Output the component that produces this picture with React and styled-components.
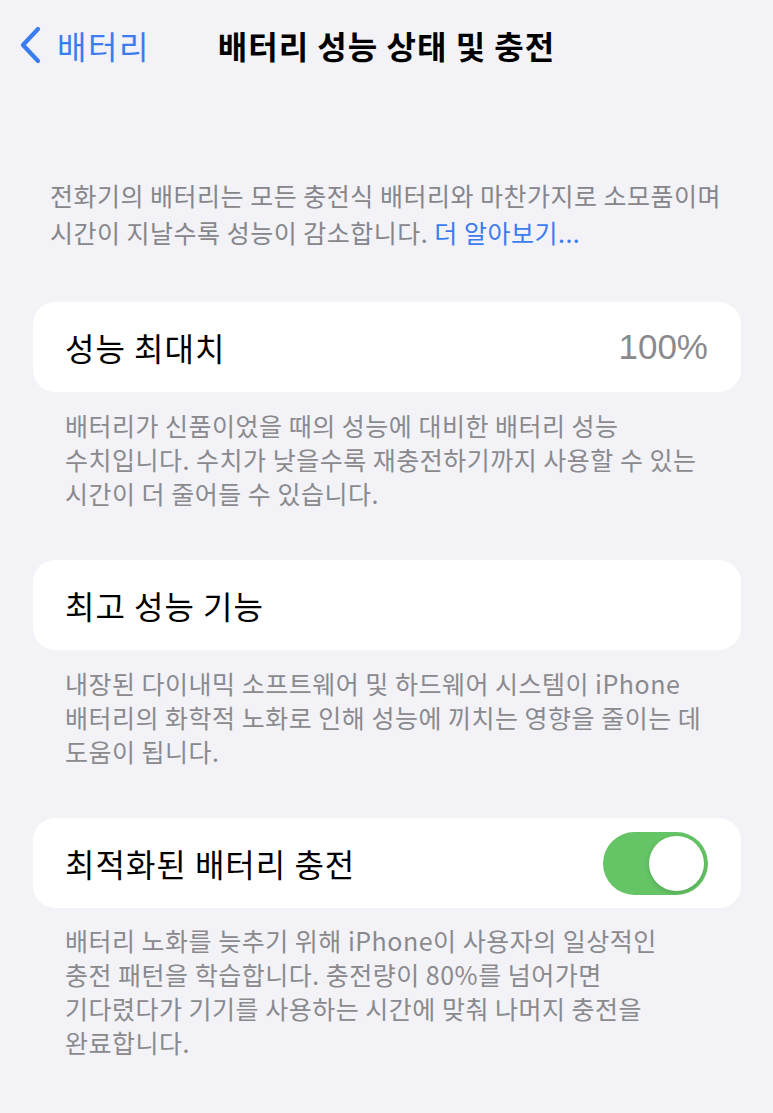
import styled, { createGlobalStyle } from "styled-components";

const GlobalStyle = createGlobalStyle`
  body {
    margin: 0;
    background: #f2f2f7;
    font-family: "Noto Sans CJK KR", "Noto Sans", sans-serif;
  }
`;

const Page = styled.div`
  width: 773px;
  min-height: 1113px;
  background: #f2f2f7;
`;

const NavBar = styled.div`
  height: 90px;
  display: grid;
  grid-template-columns: 1fr auto 1fr;
  align-items: center;
`;

const BackButton = styled.div`
  display: flex;
  align-items: center;
  gap: 16px;
  padding-left: 19px;
  color: #3b7cf0;
  font-size: 32px;
  letter-spacing: 1.5px;
`;

const Title = styled.h1`
  margin: 0;
  font-size: 32px;
  font-weight: 700;
  letter-spacing: 1px;
  color: #000;
`;

const Intro = styled.p`
  margin: 87px 0 0;
  padding: 0 20px 0 50px;
  font-size: 25px;
  line-height: 37px;
  letter-spacing: 0.5px;
  color: #86868b;
`;

const Link = styled.span`
  color: #3b7cf0;
`;

const Card = styled.div`
  margin: ${(p) => p.$top}px 32px 0 33px;
  height: 90px;
  background: #fff;
  border-radius: 22px;
  padding: 0 33px 0 32px;
  display: flex;
  align-items: center;
  justify-content: space-between;
`;

const Label = styled.span`
  font-size: 32px;
  color: #000;
  letter-spacing: 1px;
`;

const Value = styled.span`
  font-size: 35px;
  color: #8a8a8e;
  font-family: "Liberation Sans", "Noto Sans CJK KR", sans-serif;
`;

const Footnote = styled.p`
  margin: ${(p) => p.$top ?? 16}px 0 0;
  padding: 0 20px 0 65px;
  font-size: 25px;
  line-height: 34px;
  letter-spacing: 0.5px;
  color: #8a8a8e;
`;

const Line = styled.span`
  display: block;
  white-space: nowrap;
`;

const Toggle = styled.div`
  width: 105px;
  height: 63px;
  border-radius: 32px;
  background: #65c466;
  display: flex;
  align-items: center;
  justify-content: flex-end;
  padding: 0 4px;
  box-sizing: border-box;
`;

const Thumb = styled.div`
  width: 55px;
  height: 55px;
  border-radius: 50%;
  background: #fff;
  box-shadow: 0 2px 5px rgba(0, 0, 0, 0.15);
`;

const Lines = ({ lines }) => lines.map((l, i) => <Line key={i}>{l}</Line>);

export default function App() {
  return (
    <Page>
      <GlobalStyle />
      <NavBar>
        <BackButton>
          <svg width="22" height="38" viewBox="0 0 22 38">
            <path
              d="M19 3 L4 19 L19 35"
              fill="none"
              stroke="#3b7cf0"
              strokeWidth="4.2"
              strokeLinecap="round"
              strokeLinejoin="round"
            />
          </svg>
          배터리
        </BackButton>
        <Title>배터리 성능 상태 및 충전</Title>
        <div />
      </NavBar>

      <Intro>
        <Line>전화기의 배터리는 모든 충전식 배터리와 마찬가지로 소모품이며</Line>
        <Line>
          시간이 지날수록 성능이 감소합니다. <Link>더 알아보기...</Link>
        </Line>
      </Intro>

      <Card $top={51}>
        <Label>성능 최대치</Label>
        <Value>100%</Value>
      </Card>
      <Footnote>
        <Lines
          lines={[
            "배터리가 신품이었을 때의 성능에 대비한 배터리 성능",
            "수치입니다. 수치가 낮을수록 재충전하기까지 사용할 수 있는",
            "시간이 더 줄어들 수 있습니다.",
          ]}
        />
      </Footnote>

      <Card $top={50}>
        <Label>최고 성능 기능</Label>
      </Card>
      <Footnote>
        <Lines
          lines={[
            "내장된 다이내믹 소프트웨어 및 하드웨어 시스템이 iPhone",
            "배터리의 화학적 노화로 인해 성능에 끼치는 영향을 줄이는 데",
            "도움이 됩니다.",
          ]}
        />
      </Footnote>

      <Card $top={50}>
        <Label>최적화된 배터리 충전</Label>
        <Toggle>
          <Thumb />
        </Toggle>
      </Card>
      <Footnote $top={15}>
        <Lines
          lines={[
            "배터리 노화를 늦추기 위해 iPhone이 사용자의 일상적인",
            "충전 패턴을 학습합니다. 충전량이 80%를 넘어가면",
            "기다렸다가 기기를 사용하는 시간에 맞춰 나머지 충전을",
            "완료합니다.",
          ]}
        />
      </Footnote>
    </Page>
  );
}
